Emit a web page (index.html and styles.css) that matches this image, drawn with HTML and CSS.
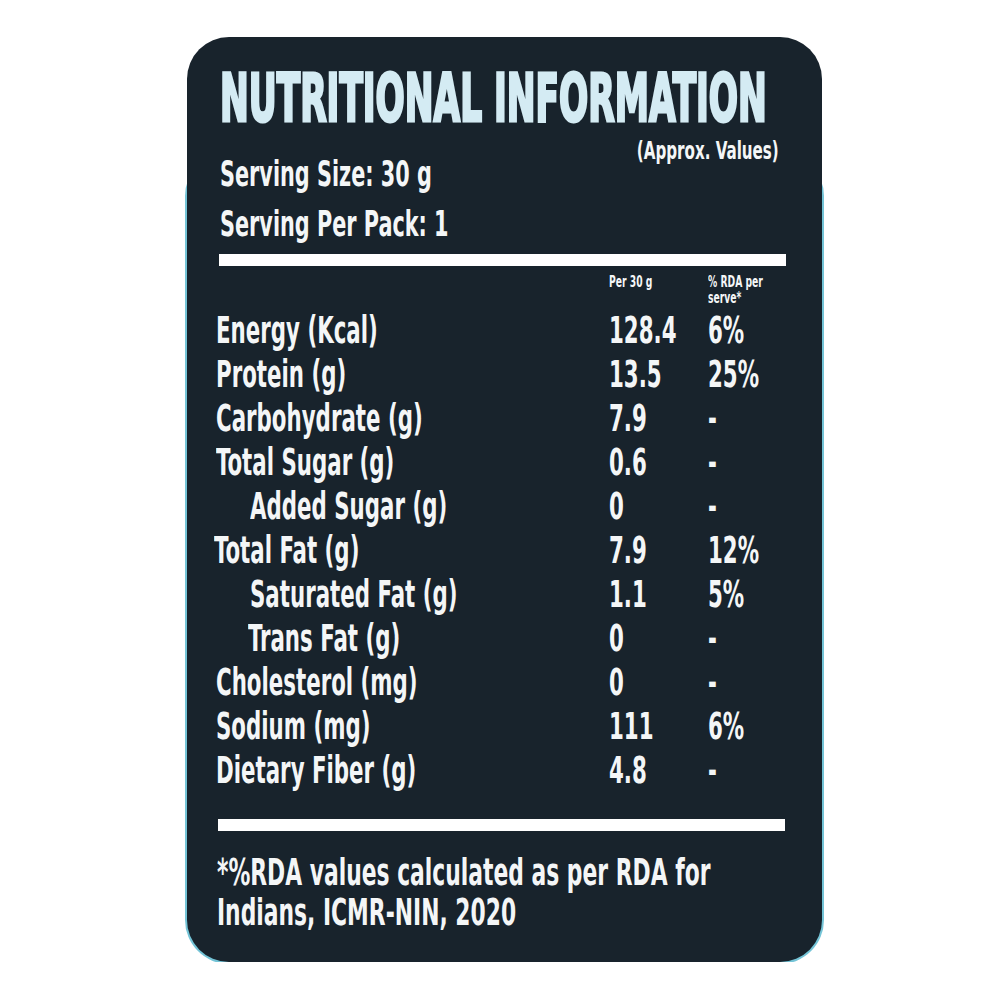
FILE: index.html
```html
<!DOCTYPE html>
<html lang="en">
<head>
<meta charset="utf-8">
<title>Nutritional Information</title>
<link rel="stylesheet" href="styles.css">
</head>
<body>
<div class="page">
  <section class="card">
    <h1 class="title"><span class="sx sx-title">NUTRITIONAL INFORMATION</span></h1>
    <div class="head">
      <div class="serving">
        <div class="serving-line"><span class="sx sx-serv">Serving Size: 30 g</span></div>
        <div class="serving-line"><span class="sx sx-serv">Serving Per Pack: 1</span></div>
      </div>
      <div class="approx"><span class="sx sx-approx">(Approx. Values)</span></div>
    </div>
    <div class="bar"></div>
    <div class="colhead">
      <div></div>
      <div class="ch"><span class="sx sx-small">Per 30 g</span></div>
      <div class="ch"><span class="sx sx-small">% RDA per<br>serve*</span></div>
    </div>
    <div class="rows">
      <div class="lab"><span class="sx sx-row">Energy (Kcal)</span></div><div class="val"><span class="sx sx-row">128.4</span></div><div class="val"><span class="sx sx-row">6%</span></div>
      <div class="lab"><span class="sx sx-row">Protein (g)</span></div><div class="val"><span class="sx sx-row">13.5</span></div><div class="val"><span class="sx sx-row">25%</span></div>
      <div class="lab"><span class="sx sx-row">Carbohydrate (g)</span></div><div class="val"><span class="sx sx-row">7.9</span></div><div class="val"><span class="sx sx-row">-</span></div>
      <div class="lab"><span class="sx sx-row">Total Sugar (g)</span></div><div class="val"><span class="sx sx-row">0.6</span></div><div class="val"><span class="sx sx-row">-</span></div>
      <div class="lab sub"><span class="sx sx-row">Added Sugar (g)</span></div><div class="val"><span class="sx sx-row">0</span></div><div class="val"><span class="sx sx-row">-</span></div>
      <div class="lab neg"><span class="sx sx-row">Total Fat (g)</span></div><div class="val"><span class="sx sx-row">7.9</span></div><div class="val"><span class="sx sx-row">12%</span></div>
      <div class="lab sub"><span class="sx sx-row">Saturated Fat (g)</span></div><div class="val"><span class="sx sx-row">1.1</span></div><div class="val"><span class="sx sx-row">5%</span></div>
      <div class="lab sub2"><span class="sx sx-row">Trans Fat (g)</span></div><div class="val"><span class="sx sx-row">0</span></div><div class="val"><span class="sx sx-row">-</span></div>
      <div class="lab"><span class="sx sx-row">Cholesterol (mg)</span></div><div class="val"><span class="sx sx-row">0</span></div><div class="val"><span class="sx sx-row">-</span></div>
      <div class="lab"><span class="sx sx-row">Sodium (mg)</span></div><div class="val"><span class="sx sx-row">111</span></div><div class="val"><span class="sx sx-row">6%</span></div>
      <div class="lab"><span class="sx sx-row">Dietary Fiber (g)</span></div><div class="val"><span class="sx sx-row">4.8</span></div><div class="val"><span class="sx sx-row">-</span></div>
    </div>
    <div class="bar bar2"></div>
    <p class="foot"><span class="sx sx-foot">*%RDA values calculated as per RDA for<br>Indians, ICMR-NIN, 2020</span></p>
  </section>
</div>
</body>
</html>
```

FILE: styles.css
```css
html {
  margin: 0;
  padding: 0;
  background: #ffffff;
}

body {
  margin: 0;
  padding: 0;
  font-family: "DejaVu Sans Condensed", "Liberation Sans", sans-serif;
  font-weight: 700;
  color: #f4f6f7;
}

.page {
  padding: 37px 0 0 187px;
}

.card {
  position: relative;
  box-sizing: border-box;
  width: 635px;
  height: 925px;
  background: #18232c;
  border-radius: 42px;
  padding: 28px 35px 0 29px;
  display: flex;
  flex-direction: column;
}

.card::before {
  content: "";
  position: absolute;
  top: 115px;
  left: -2px;
  right: -2px;
  bottom: -2px;
  background: #74c4d7;
  border-radius: 44px;
  z-index: -1;
}

.sx {
  display: inline-block;
  white-space: nowrap;
  transform-origin: 0 50%;
}

.title {
  margin: 0 0 0 4px;
  height: 66px;
  font-size: 48px;
  line-height: 48px;
  font-weight: 700;
  color: #d4ebf3;
  -webkit-text-stroke: 2.2px #d4ebf3;
}

.sx-title {
  transform: scale(0.796, 1.375);
  transform-origin: 0 0;
}

.head {
  margin-top: 8px;
  display: flex;
  justify-content: space-between;
  align-items: flex-start;
}

.serving {
  padding-top: 10px;
  padding-left: 4px;
}

.serving-line {
  font-size: 36px;
  line-height: 50px;
}

.sx-serv { transform: scaleX(0.642); }

.approx {
  font-size: 24px;
  line-height: 24px;
  margin-right: 24px;
}

.sx-approx {
  transform: scaleX(0.70);
  transform-origin: 100% 50%;
}

.bar {
  height: 12px;
  background: #ffffff;
  margin: 5px 0 0 3px;
  width: 567px;
}

.colhead {
  margin-top: 7.5px;
  display: grid;
  grid-template-columns: 393px 99px 1fr;
  font-size: 15.5px;
  line-height: 16px;
}

.sx-small { transform: scaleX(0.66); }

.rows {
  margin-top: 3px;
  display: grid;
  grid-template-columns: 393px 99px 1fr;
  font-size: 37px;
  line-height: 44px;
}

.sx-row { transform: scaleX(0.641); }

.lab.sub { padding-left: 34px; }
.lab.sub2 { padding-left: 32px; }
.lab.neg { margin-left: -2px; }

.bar2 {
  margin-top: 26px;
  margin-left: 2px;
}

.foot {
  margin: 22px 0 0 1px;
  font-size: 34px;
  line-height: 35px;
}

.sx-foot {
  transform: scale(0.714, 1.12);
  transform-origin: 0 0;
}
```
